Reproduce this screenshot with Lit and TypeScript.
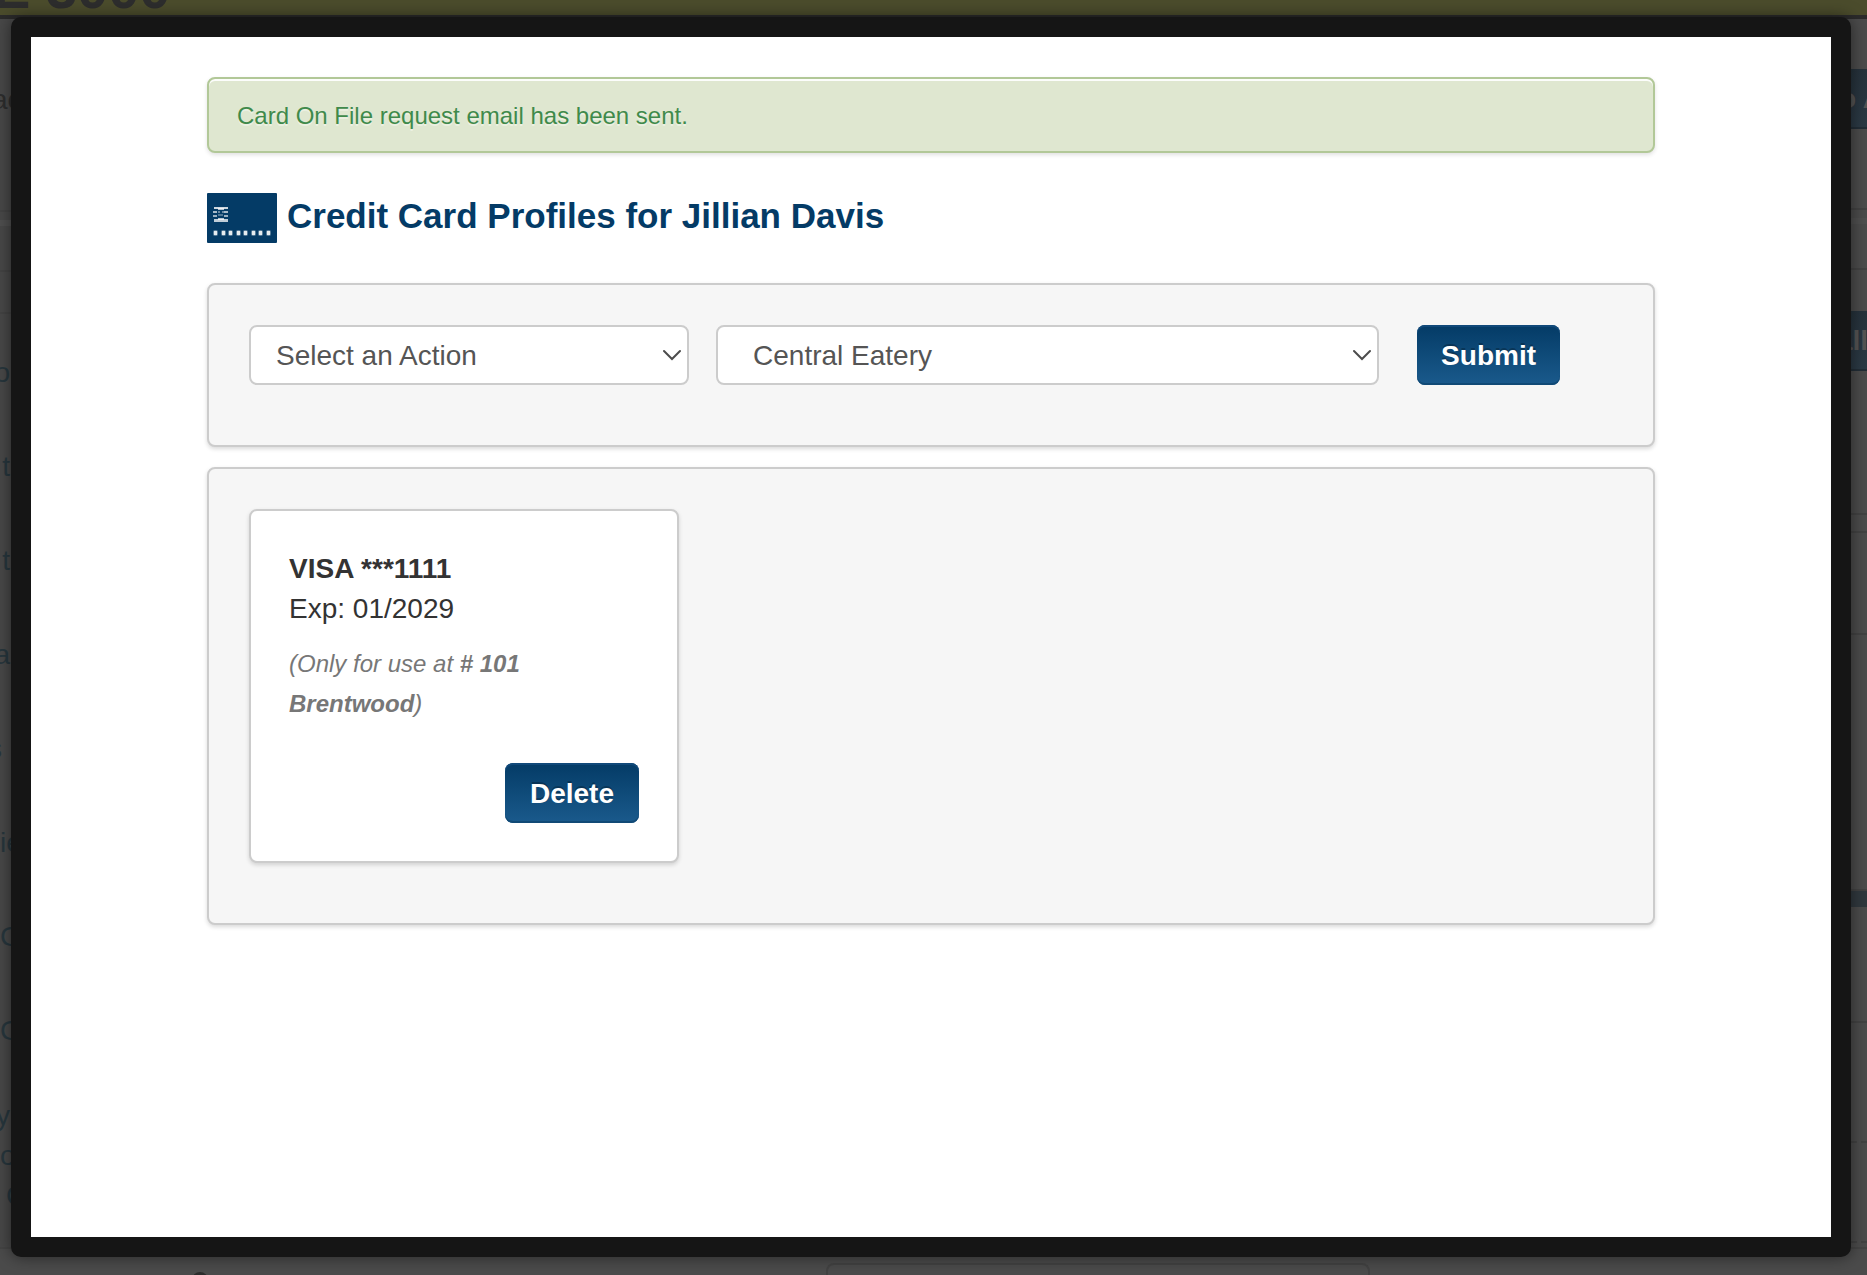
import { LitElement, html, css, svg } from "lit";
import { customElement, state } from "lit/decorators.js";

const sans = css`"Liberation Sans", Arial, Helvetica, sans-serif`;

/** The dimmed account page that stays visible around the dialog. */
@customElement("page-behind")
class PageBehind extends LitElement {
  static styles = css`
    :host { display: flex; flex-direction: column; height: 100%; overflow: hidden;
      background: #4b4b4b; font: 28px/40px ${sans}; color: #2d2d2d; }
    .bar { flex: none; height: 15px; display: flex; align-items: flex-end; overflow: hidden;
      background: #4b4c2c; border-bottom: 4px solid #2b2b2b;
      font-size: 56px; line-height: 40px; font-weight: bold; }
    .title { margin: 0 0 6px -7px; font: inherit; white-space: pre; }
    .columns { flex: 1; min-height: 0; display: flex; justify-content: space-between; overflow: hidden; }
    .left, .right { width: 16px; overflow: hidden; display: flex; flex-direction: column; }
    .left { width: 11px; background: #484848; }
    .crumb { height: 130px; padding-top: 61px; margin-left: -8px; }
    .crumb, .item { white-space: nowrap; flex: none; }
    .rules { flex: none; height: 58px; border-top: 2px solid #434343;
      border-bottom: 2px solid #434343; }
    .rules::before { content: ""; display: block; height: 8px; border-bottom: 6px solid #4f4f4f; }
    .gap { flex: none; height: 40px; margin-bottom: 18px; border-bottom: 2px solid #434343; }
    .item { height: 94px; display: flex; padding-top: 21px; box-sizing: border-box;
      color: #27363d; text-decoration: none; }
    .end { justify-content: flex-end; padding-right: 1px; }
    .far { justify-content: flex-end; padding-right: 9px; }
    .tight { height: 40px; padding-top: 2px; }
    .lead { margin-top: 10px; }
    .inset { padding-left: 6px; }
    .btn { height: 60px; flex: none; background: linear-gradient(#26323b, #2b3944);
      border-bottom: 2px solid #222d36; box-sizing: border-box; line-height: 60px;
      font-weight: bold; color: #545454; white-space: nowrap; }
    .first { margin-top: 50px; }
    .first span { margin-left: -12px; }
    .second span { margin-left: -14px; }
    .block { flex: none; box-sizing: border-box; border-bottom: 2px solid #424242; }
    .h1 { height: 81px; } .h2 { height: 14px; border-bottom: 6px solid #4f4f4f; }
    .h3 { height: 46px; } .h4 { height: 41px; border: 0; }
    .h5 { height: 144px; } .h6 { height: 18px; } .h7 { height: 102px; } .h8 { height: 256px; }
    .strip { flex: none; height: 16px; background: #30383e; }
    .h9 { height: 116px; } .h10 { height: 120px; border-bottom-style: dashed; }
    .h11 { height: 100px; border-bottom-style: dashed; }
    .footer { flex: none; box-sizing: border-box; height: 28px; overflow: hidden; display: flex;
      align-items: flex-end; justify-content: space-between; border-top: 2px solid #444; }
    .knob { width: 16px; height: 16px; margin: 0 0 -13px 192px; border-radius: 50%; background: #2d2d2d; }
    .tray { width: 540px; height: 10px; margin-right: 497px; border: 2px solid #424242;
      border-bottom: 0; border-radius: 8px 8px 0 0; }
  `;

  private items = [
    ["o", "end"], ["t", "end"], ["t", "end"], ["a", "end"], ["s", "far"],
    ["ie", ""], ["C", ""], ["C", ""], ["y", "tight lead end"], ["o", "tight"], ["C", "tight inset"],
  ];

  render() {
    return html`
      <header class="bar"><h1 class="title">E 3000</h1></header>
      <div class="columns">
        <nav class="left" aria-label="Account">
          <div class="crumb">ac</div>
          <div class="rules"></div>
          <div class="gap"></div>
          ${this.items.map(([t, c]) => html`<a class="item ${c}" href="#">${t}</a>`)}
        </nav>
        <div class="right">
          <div class="btn first"><span>o A</span></div>
          <div class="block h1"></div><div class="block h2"></div>
          <div class="block h3"></div><div class="block h4"></div>
          <div class="btn second"><span>all</span></div>
          <div class="block h5"></div><div class="block h6"></div>
          <div class="block h7"></div><div class="block h8"></div>
          <div class="strip"></div>
          <div class="block h9"></div><div class="block h10"></div><div class="block h11"></div>
        </div>
      </div>
      <footer class="footer"><span class="knob"></span><span class="tray"></span></footer>`;
  }
}

const dots = [6, 14, 21, 29, 36, 44, 51, 59];

const cardIcon = svg`
  <rect width="70" height="50" rx="1" fill="#043b66"/>
  <g fill="#fff">
    <rect x="7" y="14" width="14" height="2" opacity=".8"/>
    <rect x="11" y="15" width="6" height="2" opacity=".7"/>
    <rect x="6" y="18" width="4" height="2" opacity=".65"/>
    <rect x="17" y="18" width="4" height="2" opacity=".65"/>
    <rect x="11" y="18" width="2" height="2" opacity=".4"/>
    <rect x="15" y="18" width="2" height="2" opacity=".4"/>
    <rect x="11" y="21" width="5" height="2" opacity=".3"/>
    <rect x="6" y="22" width="4" height="2" opacity=".6"/>
    <rect x="17" y="22" width="4" height="2" opacity=".6"/>
    <rect x="11" y="25" width="6" height="2" opacity=".7"/>
    <rect x="7" y="26" width="14" height="3" opacity=".75"/>
    ${dots.map((x) => svg`
      <rect x=${x} y="37" width="5" height="6" rx="2" opacity=".35"/>
      <rect x=${x + 1} y="38" width="3" height="4" opacity=".85"/>`)}
  </g>`;

@customElement("app-root")
class AppRoot extends LitElement {
  static styles = css`
    :host { display: grid; height: 100vh; font: 28px/40px ${sans}; color: #333; }
    page-behind, .overlay { grid-area: 1 / 1; min-width: 0; min-height: 0; }
    .overlay { display: flex; padding: 17px 16px 18px 11px; position: relative; }
    .dialog { flex: 1; box-sizing: border-box; border: 20px solid #151515; border-radius: 10px;
      background: #fff; box-shadow: 0 0 16px rgba(0, 0, 0, 0.5); padding: 40px 176px; overflow: hidden; }
    .alert { padding: 17px 28px 15px; border: 2px solid #b2c898; border-radius: 8px;
      background: #dfe7d0; color: #3f8a4b; font-size: 24px;
      text-shadow: 0 2px 0 rgba(255, 255, 255, 0.4);
      box-shadow: inset 0 2px 0 rgba(255, 255, 255, 0.9), 0 2px 4px rgba(0, 0, 0, 0.12); }
    .heading { display: flex; gap: 10px; margin: 40px 0; color: #043b66; font-size: 35px;
      line-height: 46px; font-weight: bold; }
    .icon { width: 70px; height: 50px; flex: none; }
    .panel { border: 2px solid #ccc; border-radius: 8px; background: #f6f6f6;
      padding: 40px 40px 60px; margin-bottom: 20px; box-shadow: 0 2px 4px rgba(0, 0, 0, 0.15); }
    .form { display: grid; grid-template-columns: 467fr 701fr auto; padding-right: 93px; }
    .field { position: relative; display: flex; }
    .action { margin-right: 27px; }
    .place { margin-right: 38px; }
    .pick { appearance: none; width: 100%; height: 60px; box-sizing: border-box; margin: 0;
      padding: 2px 40px 0 25px; border: 2px solid #ccc; border-radius: 8px; background: #fff;
      color: #555; font: inherit; }
    .place .pick { padding-left: 35px; }
    .chevron { position: absolute; right: 8px; top: 24px; width: 18px; height: 12px;
      pointer-events: none; fill: none; stroke: #4c4c4c; stroke-width: 2; stroke-linecap: round; }
    .button { height: 60px; min-width: 134px; padding: 2px 24px 0; border: 0; border-radius: 8px;
      background: linear-gradient(#043b66, #1a5a8c); color: #fff; font: bold 28px/40px ${sans};
      text-shadow: 0 -2px 0 rgba(0, 0, 0, 0.25);
      box-shadow: inset 0 2px 0 #11497a, inset 0 -2px 0 #114a76; }
    .card { box-sizing: border-box; width: 430px; padding: 38px; border: 2px solid #ccc;
      border-radius: 8px; background: #fff; box-shadow: 0 2px 4px rgba(0, 0, 0, 0.15); }
    .line { margin: 0; }
    .note { margin: 15px 60px 39px 0; color: #777; font-size: 24px; font-style: italic; }
    .foot { display: flex; justify-content: flex-end; }
  `;

  @state() private action = "Select an Action";

  private chevron() {
    return html`<svg class="chevron" viewBox="0 0 18 12" aria-hidden="true">
      <path d="M1 2 L9 10 L17 2"/></svg>`;
  }

  render() {
    return html`
      <page-behind aria-hidden="true"></page-behind>
      <div class="overlay">
        <main class="dialog" role="dialog" aria-labelledby="heading">
          <div class="alert" role="status">Card On File request email has been sent.</div>
          <h2 class="heading" id="heading">
            <svg class="icon" viewBox="0 0 70 50" aria-hidden="true">${cardIcon}</svg>
            <span>Credit Card Profiles for Jillian Davis</span>
          </h2>
          <form class="panel form" @submit=${(e: Event) => e.preventDefault()}>
            <label class="field action">
              <select class="pick" aria-label="Action"><option>${this.action}</option></select>
              ${this.chevron()}
            </label>
            <label class="field place">
              <select class="pick" aria-label="Location"><option>Central Eatery</option></select>
              ${this.chevron()}
            </label>
            <button class="button" type="submit">Submit</button>
          </form>
          <section class="panel">
            <article class="card">
              <p class="line"><strong>VISA ***1111</strong></p>
              <p class="line">Exp: 01/2029</p>
              <p class="note">(Only for use at <strong># 101 Brentwood</strong>)</p>
              <div class="foot"><button class="button" type="button">Delete</button></div>
            </article>
          </section>
        </main>
      </div>`;
  }
}
